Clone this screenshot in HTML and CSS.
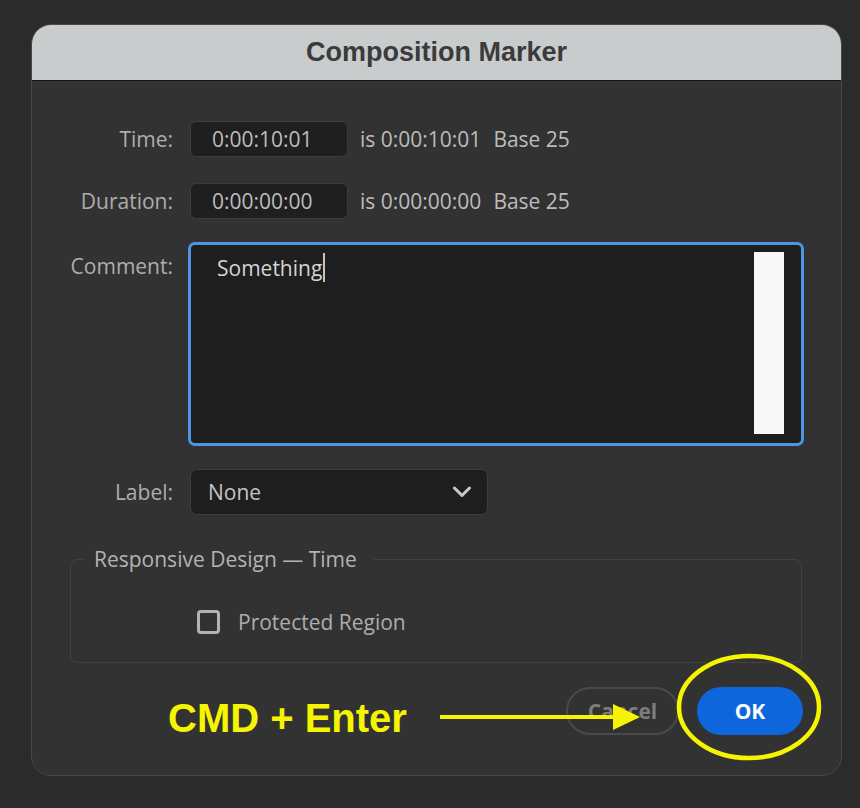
FILE: index.html
```html
<!DOCTYPE html>
<html lang="en">
<head>
<meta charset="utf-8">
<title>Composition Marker</title>
<link rel="stylesheet" href="styles.css">
</head>
<body>
<div class="dialog">
  <div class="titlebar">Composition Marker</div>
  <div class="content">
    <div class="row">
      <div class="label">Time:</div>
      <div class="field">0:00:10:01</div>
      <div class="info">is 0:00:10:01<span class="base">Base 25</span></div>
    </div>
    <div class="row row-duration">
      <div class="label">Duration:</div>
      <div class="field">0:00:00:00</div>
      <div class="info">is 0:00:00:00<span class="base">Base 25</span></div>
    </div>
    <div class="row row-comment">
      <div class="label label-top">Comment:</div>
      <div class="comment">
        <div class="comment-text">Something<span class="caret"></span></div>
        <div class="scrollbar"></div>
      </div>
    </div>
    <div class="row row-label">
      <div class="label">Label:</div>
      <div class="select">
        <span>None</span>
        <svg class="chevron" width="20" height="12" viewBox="0 0 20 12"><polyline points="2.5,2 10,9.5 17.5,2" fill="none" stroke="#c9c9c9" stroke-width="3" stroke-linecap="round" stroke-linejoin="round"/></svg>
      </div>
    </div>
    <fieldset class="group">
      <legend>Responsive Design — Time</legend>
      <div class="check-row">
        <span class="checkbox"></span>
        <span class="check-label">Protected Region</span>
      </div>
    </fieldset>
    <div class="buttons">
      <div class="btn btn-cancel">Cancel</div>
      <div class="btn btn-ok">OK</div>
    </div>
  </div>
</div>
<div class="hint">CMD + Enter</div>
<svg class="overlay" width="860" height="808" viewBox="0 0 860 808">
  <line x1="440" y1="717" x2="616" y2="717" stroke="#f5f500" stroke-width="4"/>
  <polygon points="613,704 640,717 613,730" fill="#f5f500"/>
  <ellipse cx="749" cy="707" rx="70" ry="51" fill="none" stroke="#f5f500" stroke-width="4.5"/>
</svg>
</body>
</html>
```
FILE: styles.css
```css
html, body {
  margin: 0;
  padding: 0;
}
body {
  background: #2b2b2b;
  width: 860px;
  height: 808px;
  position: relative;
  overflow: hidden;
  font-family: "Open Sans", "Noto Sans", sans-serif;
  font-size: 21px;
  color: #b0b0b0;
}
.dialog {
  margin: 24px 0 0 31px;
  width: 811px;
  height: 752px;
  box-sizing: border-box;
  border: 1px solid #484848;
  border-radius: 20px;
  background: #323232;
  overflow: hidden;
}
.titlebar {
  height: 55px;
  background: #c8cccc;
  border-bottom: 1px solid #161616;
  display: flex;
  align-items: center;
  justify-content: center;
  font-family: "Liberation Sans", Arial, sans-serif;
  font-weight: bold;
  font-size: 27px;
  color: #3b3b3b;
}
.content {
  padding-top: 40px;
  display: flex;
  flex-direction: column;
}
.row {
  display: flex;
  align-items: center;
}
.label {
  width: 141px;
  margin-right: 17px;
  text-align: right;
  color: #adadad;
  flex: none;
}
.label-top {
  align-self: flex-start;
  padding-top: 10px;
}
.field {
  width: 158px;
  height: 36px;
  box-sizing: border-box;
  border: 1px solid #3d3d3d;
  border-radius: 6px;
  background: #1f1f1f;
  padding-left: 21px;
  display: flex;
  align-items: center;
  color: #bdbdbd;
}
.info {
  margin-left: 12px;
  color: #bcbcbc;
}
.base {
  margin-left: 12px;
}
.row-duration {
  margin-top: 26px;
}
.row-comment {
  margin-top: 23px;
}
.comment {
  margin-left: -2px;
  width: 616px;
  height: 204px;
  box-sizing: border-box;
  border: 3px solid #4f95e4;
  border-radius: 7px;
  background: #1e1e1e;
  display: flex;
  padding: 7px 17px 9px 26px;
}
.comment-text {
  flex: 1;
  padding-top: 1px;
  line-height: 30px;
  color: #d4d4d4;
}
.caret {
  display: inline-block;
  width: 2px;
  height: 29px;
  background: #c4c4c4;
  vertical-align: top;
  margin-left: 1px;
}
.scrollbar {
  width: 30px;
  background: #f8f8f8;
}
.row-label {
  margin-top: 23px;
}
.select {
  width: 298px;
  height: 46px;
  box-sizing: border-box;
  border: 1px solid #3d3d3d;
  border-radius: 7px;
  background: #1e1e1e;
  padding: 0 15px 0 17px;
  display: flex;
  align-items: center;
  justify-content: space-between;
  color: #c4c4c4;
}
.chevron {
  display: block;
}
.group {
  margin: 30px 0 0 38px;
  width: 732px;
  height: 118px;
  box-sizing: border-box;
  border: 1px solid #424242;
  border-radius: 7px;
  padding: 0;
  min-width: 0;
}
.group legend {
  margin-left: 12px;
  padding: 0 17px 0 11px;
  line-height: 28px;
  color: #b3b3b3;
}
.check-row {
  display: flex;
  align-items: center;
  margin: 35px 0 0 126px;
}
.checkbox {
  width: 23px;
  height: 24px;
  box-sizing: border-box;
  border: 3px solid #b3b3b3;
  border-radius: 4px;
  margin-right: 18px;
}
.check-label {
  color: #adadad;
}
.buttons {
  margin-top: 24px;
  padding-right: 38px;
  display: flex;
  justify-content: flex-end;
  gap: 18px;
}
.btn {
  height: 48px;
  box-sizing: border-box;
  border-radius: 24px;
  display: flex;
  align-items: center;
  justify-content: center;
  font-weight: bold;
  font-size: 21px;
}
.btn-cancel {
  width: 113px;
  border: 2px solid #4a4a4a;
  color: #7d7d7d;
}
.btn-ok {
  width: 106px;
  background: #0d66dc;
  color: #ffffff;
}
.hint {
  position: absolute;
  left: 168px;
  top: 698px;
  font-family: "Liberation Sans", Arial, sans-serif;
  font-weight: bold;
  font-size: 40px;
  line-height: 40px;
  color: #f5f500;
  white-space: nowrap;
}
.overlay {
  position: absolute;
  left: 0;
  top: 0;
  pointer-events: none;
}
```
